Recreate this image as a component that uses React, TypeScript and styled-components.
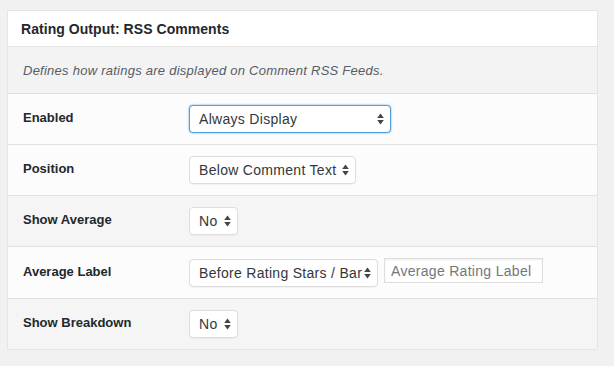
import React from 'react';
import styled, { createGlobalStyle } from 'styled-components';

const GlobalStyle = createGlobalStyle`
    body {
        margin: 0;
        background: #f1f1f1;
        font-family: "Liberation Sans", Arial, sans-serif;
        color: #23282d;
    }
`;

const Page = styled.div`
    padding: 10px 16px 16px 7px;
`;

const Panel = styled.div`
    width: 591px;
    box-sizing: border-box;
    border: 1px solid #e5e5e5;
    background: #fff;
`;

const Header = styled.div`
    height: 35px;
    display: flex;
    align-items: center;
    padding: 0 12px 0 13px;
    border-bottom: 1px solid #e5e5e5;
    font-size: 14px;
    font-weight: 700;
    color: #23282d;
    letter-spacing: 0.05px;
`;

const Description = styled.div`
    height: 46px;
    display: flex;
    align-items: center;
    padding: 0 15px;
    background: #f3f3f3;
    border-bottom: 1px solid #e1e1e1;
    font-size: 13px;
    font-style: italic;
    letter-spacing: 0.25px;
    color: #555d66;
`;

const Row = styled.div<{ shaded?: boolean; tall?: boolean }>`
    height: ${(p) => (p.tall ? 51 : 50)}px;
    display: grid;
    grid-template-columns: 166px 1fr;
    align-items: center;
    padding-left: 15px;
    background: ${(p) => (p.shaded ? '#f5f5f5' : '#fcfcfc')};
    border-bottom: 1px solid #e1e1e1;

    &:last-child {
        border-bottom: none;
    }
`;

const Label = styled.div`
    font-size: 13px;
    font-weight: 700;
    color: #23282d;
    padding-bottom: 3px;
`;

const Controls = styled.div`
    display: flex;
    align-items: center;
    gap: 6px;
`;

const SelectWrap = styled.div<{ w: number }>`
    position: relative;
    width: ${(p) => p.w}px;
    height: 28px;
`;

const NativeSelect = styled.select<{ focused?: boolean }>`
    appearance: none;
    -webkit-appearance: none;
    width: 100%;
    height: 100%;
    box-sizing: border-box;
    margin: 0;
    padding: 0 12px 0 9px;
    border: 1px solid ${(p) => (p.focused ? '#5b9dd9' : '#ddd')};
    border-radius: 4px;
    box-shadow: ${(p) => (p.focused ? '0 0 2px rgba(30, 140, 190, 0.8)' : '0 1px 1px rgba(0, 0, 0, 0.04)')};
    background: #fff;
    font-family: "Liberation Sans", Arial, sans-serif;
    font-size: 14px;
    letter-spacing: 0.3px;
    color: #32373c;
    outline: none;
`;

const Arrows = styled.svg`
    position: absolute;
    right: 7px;
    top: 50%;
    margin-top: -6px;
    pointer-events: none;
`;

const TextInput = styled.input`
    width: 159px;
    height: 25px;
    box-sizing: border-box;
    margin: 0 0 4px;
    padding: 0 6px;
    border: 1px solid #ddd;
    box-shadow: inset 0 1px 2px rgba(0, 0, 0, 0.07);
    background: #fff;
    font-family: "Liberation Sans", Arial, sans-serif;
    font-size: 14px;
    letter-spacing: 0.3px;
    color: #32373c;
    outline: none;

    &::placeholder {
        color: #72777c;
    }
`;

const Select: React.FC<{ value: string; width: number; focused?: boolean }> = ({ value, width, focused }) => (
    <SelectWrap w={width}>
        <NativeSelect focused={focused} defaultValue={value}>
            <option>{value}</option>
        </NativeSelect>
        <Arrows width="7" height="12" viewBox="0 0 7 12">
            <path d="M3.5 0.5 L6.8 5 L0.2 5 Z" fill="#444" />
            <path d="M3.5 11.5 L6.8 7 L0.2 7 Z" fill="#444" />
        </Arrows>
    </SelectWrap>
);

const App: React.FC = () => (
    <Page>
        <GlobalStyle />
        <Panel>
            <Header>Rating Output: RSS Comments</Header>
            <Description>Defines how ratings are displayed on Comment RSS Feeds.</Description>
            <Row>
                <Label>Enabled</Label>
                <Controls>
                    <Select value="Always Display" width={202} focused />
                </Controls>
            </Row>
            <Row>
                <Label>Position</Label>
                <Controls>
                    <Select value="Below Comment Text" width={167} />
                </Controls>
            </Row>
            <Row shaded>
                <Label>Show Average</Label>
                <Controls>
                    <Select value="No" width={49} />
                </Controls>
            </Row>
            <Row tall>
                <Label>Average Label</Label>
                <Controls>
                    <Select value="Before Rating Stars / Bar" width={189} />
                    <TextInput placeholder="Average Rating Label" />
                </Controls>
            </Row>
            <Row shaded>
                <Label>Show Breakdown</Label>
                <Controls>
                    <Select value="No" width={49} />
                </Controls>
            </Row>
        </Panel>
    </Page>
);

export default App;
